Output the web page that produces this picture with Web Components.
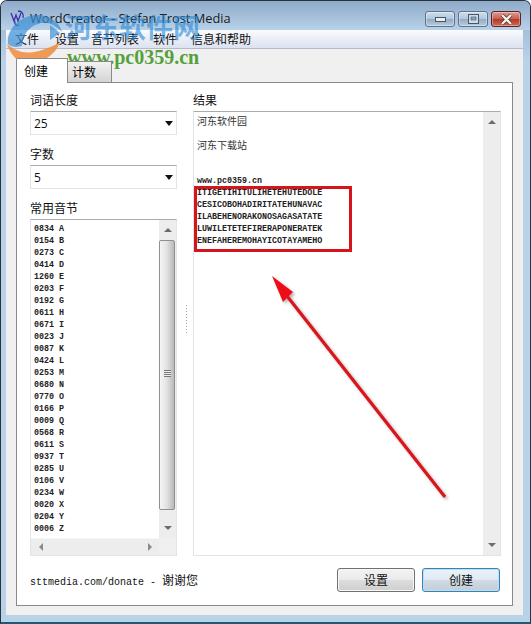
<!DOCTYPE html>
<html>
<head>
<meta charset="utf-8">
<style>
  html, body { margin: 0; padding: 0; background: #fff; }
  body { font: 12px "Open Sans", "Noto Sans CJK SC", sans-serif; color: #000; }
</style>
</head>
<body>
<word-creator></word-creator>

<script>
const CJK = '"Open Sans", "Noto Sans CJK SC", sans-serif';

class WinTitlebar extends HTMLElement {
  constructor() {
    super();
    this.attachShadow({mode: 'open'}).innerHTML = `
      <style>
        :host { display: flex; height: 29px; align-items: center; justify-content: space-between; padding: 0 9px 0 29px; position: relative;
          background: linear-gradient(#8fabc9, #a6c0da 55%, #b9d2ea); border-radius: 6px 6px 0 0; }
        .title { font: 12.8px ${CJK}; color: #1a1a1a; margin-top: 5px; }
        .icon { position: absolute; left: 9px; top: 9px; }
        .btns { display: flex; gap: 3px; margin-top: 7px; }
        .b { box-sizing: border-box; width: 30px; height: 16px; border: 1px solid #5d7389; border-radius: 3px; display: flex; align-items: center; justify-content: center;
          background: linear-gradient(#cfdeec, #b3c8dc 48%, #93acc4 52%, #b6cce0); box-shadow: inset 0 0 0 1px rgba(255,255,255,.35); }
        .b.close { border-color: #5e2226; background: linear-gradient(#dd9a8c, #c9604f 48%, #b23a2b 52%, #cf6a52); }
        .btns svg { display: block; }
      </style>
      <svg class="icon" width="15" height="18" fill="none" stroke="#3a2fa8" stroke-width="1.3">
        <path d="M1 3L4 11L6 5L8 11L11 3"/><path d="M8 1C12 1 14 4 13 8"/><path d="M5 11C4 14 6 16 9 15"/>
      </svg>
      <span class="title"><slot></slot></span>
      <div class="btns">
        <div class="b"><svg width="11" height="5"><rect x=".5" y=".5" width="10" height="4" fill="#e8eef4" stroke="#46566a"/></svg></div>
        <div class="b"><svg width="11" height="10"><rect x=".5" y=".5" width="10" height="9" fill="#cfdbe6" stroke="#46566a"/><rect x="3" y="3" width="5" height="3" fill="#8fa6bc" stroke="#46566a" stroke-width=".6"/></svg></div>
        <div class="b close"><svg width="13" height="11"><path d="M2 1L11 10M11 1L2 10" stroke="#4d2a28" stroke-width="3.6"/><path d="M2 1L11 10M11 1L2 10" stroke="#f4f1ee" stroke-width="2.4"/></svg></div>
      </div>`;
  }
}

class WinMenu extends HTMLElement {
  constructor() {
    super();
    this.attachShadow({mode: 'open'}).innerHTML = `
      <style>
        :host { display: flex; height: 18px; gap: 14px; padding-left: 9px; align-items: center; font: 12px ${CJK}; color: #111;
          background: linear-gradient(#fbfcfe, #eef1f8 35%, #dce2f0); border-bottom: 1px solid #b9b7c8; }
      </style>
      <slot></slot>`;
  }
}

class TabStrip extends HTMLElement {
  constructor() {
    super();
    this.attachShadow({mode: 'open'}).innerHTML = `
      <style>
        :host { display: flex; flex-direction: column; height: 566px; box-sizing: border-box; padding: 9px 10px 9px 10px; background: #f0f0f0; }
        .tabs { display: flex; height: 24px; align-items: flex-end; position: relative; z-index: 1; }
        .tab { box-sizing: border-box; font: 12px ${CJK}; display: flex; align-items: center; border: 1px solid #8a8a8a; border-bottom: 0; }
        .on { width: 52px; height: 25px; margin-bottom: -1px; padding-left: 7px; background: #fff; border-radius: 2px 0 0 0; }
        .off { width: 44px; height: 21px; padding-left: 4px; border-left: 0; background: linear-gradient(#f2f2f2, #d4d4d4); border-radius: 0 2px 0 0; }
        .panel { flex: 1; box-sizing: border-box; background: #fff; border: 1px solid #8a8a8a; }
      </style>
      <div class="tabs"><div class="tab on">创建</div><div class="tab off">计数</div></div>
      <div class="panel"><slot></slot></div>`;
  }
}

class ComboBox extends HTMLElement {
  constructor() {
    super();
    this.attachShadow({mode: 'open'}).innerHTML = `
      <style>
        :host { display: flex; align-items: center; justify-content: space-between; box-sizing: border-box; height: 24px; padding: 0 3px 0 3px;
          font: 12px "Open Sans", sans-serif; color: #111; border: 1px solid #e2e3ea; border-top-color: #ababab; background: #fff; }
        i { border: 4px solid transparent; border-top: 5px solid #111; border-bottom: 0; }
      </style>
      <slot></slot><i></i>`;
  }
}

class ScrollBar extends HTMLElement {
  constructor() {
    super();
    this.attachShadow({mode: 'open'}).innerHTML = `
      <style>
        :host { display: flex; flex-direction: column; width: 17px; flex: none; background: #ededee; }
        :host([empty]) .thumb { display: none; }
        .arrow { height: 20px; display: flex; align-items: center; justify-content: center; flex: none; }
        .up { border: 4px solid transparent; border-bottom: 4px solid #6c6c6c; border-top: 0; }
        .down { border: 4px solid transparent; border-top: 4px solid #6c6c6c; border-bottom: 0; }
        .thumb { box-sizing: border-box; margin: 0 1px 0 0; flex: none; height: var(--thumb, 0); border: 1px solid #8f8f8f; border-radius: 2px;
          background: linear-gradient(90deg, #f5f5f5, #e4e4e4 45%, #b9b9b9); display: flex; align-items: center; justify-content: center; }
        .grip { width: 7px; height: 7px; margin-bottom: 4px; background: repeating-linear-gradient(#777 0 1px, #eee 1px 2px); }
        .fill { flex: 1; }
      </style>
      <div class="arrow"><div class="up"></div></div>
      <div class="thumb"><div class="grip"></div></div>
      <div class="fill"></div>
      <div class="arrow"><div class="down"></div></div>`;
  }
}

class SyllableList extends HTMLElement {
  constructor() {
    super();
    this.attachShadow({mode: 'open'}).innerHTML = `
      <style>
        :host { display: grid; grid-template-columns: 1fr 17px; grid-template-rows: 1fr 17px; box-sizing: border-box; height: 337px;
          border: 1px solid #e2e3ea; border-top-color: #ababab; background: #fff; }
        .rows { padding: 3px 0 0 3px; font: bold 8.35px/12px "Liberation Mono", monospace; color: #222; white-space: pre; overflow: hidden; }
        scroll-bar { grid-row: 1; grid-column: 2; --thumb: 270px; }
        .h { grid-row: 2; grid-column: 1; background: #ededee; display: flex; align-items: center; justify-content: space-between; padding: 0 7px 0 8px; border-top: 1px solid #f6f6f6; }
        .l { border: 4px solid transparent; border-right: 4px solid #8a8a8a; border-left: 0; }
        .r { border: 4px solid transparent; border-left: 4px solid #8a8a8a; border-right: 0; }
        .corner { background: #f0f0f0; }
      </style>
      <div class="rows"><slot></slot></div>
      <scroll-bar></scroll-bar>
      <div class="h"><div class="l"></div><div class="r"></div></div>
      <div class="corner"></div>`;
  }
}

class ResultBox extends HTMLElement {
  constructor() {
    super();
    this.attachShadow({mode: 'open'}).innerHTML = `
      <style>
        :host { display: flex; box-sizing: border-box; height: 445px; border: 1px solid #e2e3ea; border-top-color: #ababab; background: #fff; }
        .text { flex: 1; padding: 3px 0 0 3px; font: bold 8.35px/12px "Liberation Mono", monospace; color: #222; white-space: pre; }
      </style>
      <div class="text"><slot></slot></div>
      <scroll-bar empty></scroll-bar>`;
  }
}

class WinButton extends HTMLElement {
  constructor() {
    super();
    this.attachShadow({mode: 'open'}).innerHTML = `
      <style>
        :host { display: flex; align-items: center; justify-content: center; box-sizing: border-box; width: 78px; height: 24px; font: 12px ${CJK}; color: #111;
          border: 1px solid #707070; border-radius: 3px; background: linear-gradient(#f2f2f2, #ebebeb 48%, #dcdcdc 52%, #cfcfcf); box-shadow: inset 0 0 0 1px #f8f8f8; }
        :host([primary]) { border-color: #3c7fb1; background: linear-gradient(#e8f3fa, #dfeaf2 48%, #cfdbe3 52%, #c3ced6); box-shadow: inset 0 0 0 1px #b6e2f5; }
      </style>
      <slot></slot>`;
  }
}

class WordCreator extends HTMLElement {
  constructor() {
    super();
    const freq = [['0834','A'],['0154','B'],['0273','C'],['0414','D'],['1260','E'],['0203','F'],['0192','G'],['0611','H'],['0671','I'],['0023','J'],['0087','K'],['0424','L'],['0253','M'],['0680','N'],['0770','O'],['0166','P'],['0009','Q'],['0568','R'],['0611','S'],['0937','T'],['0285','U'],['0106','V'],['0234','W'],['0020','X'],['0204','Y'],['0006','Z']];
    const cjk = "display:inline-block;height:12px;vertical-align:top;font:10px/12px 'Noto Sans CJK SC',sans-serif;color:#333";
    this.attachShadow({mode: 'open'}).innerHTML = `
      <style>
        :host { display: block; position: relative; width: 531px; height: 624px; overflow: hidden; }
        .frame { box-sizing: border-box; height: 624px; padding: 1px 7px 7px 5px; border-radius: 7px 7px 0 0; border: 1px solid #27343c; border-bottom-width: 2px; border-bottom-color: #1f5a6e;
          background: linear-gradient(#8fabc9 0, #a6c0da 30px, #b9d2ea 60px, #b9d2ea); position: relative; }
        win-titlebar { margin: -1px -7px 0 -5px; }
        .form { display: grid; grid-template-columns: 147px 308px; column-gap: 16px; padding: 10px 0 0 13px; position: relative; }
        .col { display: flex; flex-direction: column; }
        .lab { font: 12px/16px ${CJK}; color: #111; height: 18px; }
        .lab.gap { margin-top: 12px; }
        .dots { position: absolute; left: 169px; top: 222px; width: 1px; height: 30px; background: repeating-linear-gradient(#a8a8a8 0 1px, transparent 1px 3px); }
        .foot { display: flex; justify-content: space-between; align-items: center; padding: 12px 12px 0 13px; }
        .donate { font: 10px "Liberation Mono", monospace; color: #111; white-space: nowrap; }
        .donate b { font: 12px ${CJK}; }
        .btns { display: flex; gap: 7px; }
        .red { position: absolute; left: 194px; top: 186px; width: 152px; height: 60px; border: 3px solid #d7141c; }
        .arrow { position: absolute; left: 0; top: 0; pointer-events: none; }
        .mark { position: absolute; left: 0; top: 0; width: 240px; height: 90px; pointer-events: none; }
        .site { position: absolute; left: 65px; top: 11px; font: bold 27px/32px "Noto Sans CJK SC", sans-serif; color: rgba(40,135,215,.6); white-space: nowrap; }
        .url { position: absolute; left: 67px; top: 46px; font: bold 20px/22px "Liberation Serif", serif; color: #55a03a; white-space: nowrap; }
      </style>
      <div class="frame">
        <win-titlebar>WordCreator - Stefan Trost Media</win-titlebar>
        <win-menu><span>文件</span><span style="margin:0 -2px 0 2px">设置</span><span>音节列表</span><span>软件</span><span>信息和帮助</span></win-menu>
        <tab-strip>
          <div class="form">
            <div class="col">
              <div class="lab">词语长度</div>
              <combo-box>25</combo-box>
              <div class="lab gap">字数</div>
              <combo-box>5</combo-box>
              <div class="lab gap">常用音节</div>
              <syllable-list>${freq.map(r => r.join(' ')).join('\n')}</syllable-list>
            </div>
            <div class="col">
              <div class="lab">结果</div>
              <result-box><span style="${cjk}">河东软件园</span>

<span style="${cjk}">河东下载站</span>


www.pc0359.cn
ITIGETIHITULIHETEHUTEDOLE
CESICOBOHADIRITATEHUNAVAC
ILABEHENORAKONOSAGASATATE
LUWILETETEFIRERAPONERATEK
ENEFAHEREMOHAYICOTAYAMEHO</result-box>
            </div>
            <div class="dots"></div>
          </div>
          <div class="foot">
            <span class="donate">sttmedia.com/donate - <b>谢谢您</b></span>
            <div class="btns"><win-button>设置</win-button><win-button primary>创建</win-button></div>
          </div>
        </tab-strip>
      </div>
      <div class="red"></div>
      <svg class="arrow" width="531" height="624">
        <defs><filter id="s" x="-20%" y="-20%" width="140%" height="140%"><feDropShadow dx="2" dy="2" stdDeviation="1.5" flood-color="#000" flood-opacity=".3"/></filter></defs>
        <g filter="url(#s)">
          <path d="M445 497L287 296" stroke="#d9141c" stroke-width="3.2" fill="none"/>
          <path d="M272 276L293 292L283 302Z" fill="#ee1018"/>
        </g>
      </svg>
      <div class="mark">
        <svg width="70" height="75" style="position:absolute;left:0;top:0">
          <path d="M8 44C6 28 22 14 40 15C52 16 60 24 62 32C54 24 46 21 38 24C28 27 23 35 22 46C16 48 11 47 8 44Z" fill="#3a8fd4" opacity=".7"/>
          <path d="M50 25L60 33L50 40Z" fill="#3a8fd4" opacity=".7"/>
          <path d="M7 44C14 50 22 54 34 52C44 50 54 46 60 42C56 54 44 62 34 62C34 66 32 68 28 68C18 62 10 54 7 44Z" fill="#ee8c3c" opacity=".85"/>
        </svg>
        <span class="site">河东软件网</span>
        <span class="url">www.pc0359.cn</span>
      </div>`;
  }
}

customElements.define('win-titlebar', WinTitlebar);
customElements.define('win-menu', WinMenu);
customElements.define('tab-strip', TabStrip);
customElements.define('combo-box', ComboBox);
customElements.define('scroll-bar', ScrollBar);
customElements.define('syllable-list', SyllableList);
customElements.define('result-box', ResultBox);
customElements.define('win-button', WinButton);
customElements.define('word-creator', WordCreator);
</script>
</body>
</html>
